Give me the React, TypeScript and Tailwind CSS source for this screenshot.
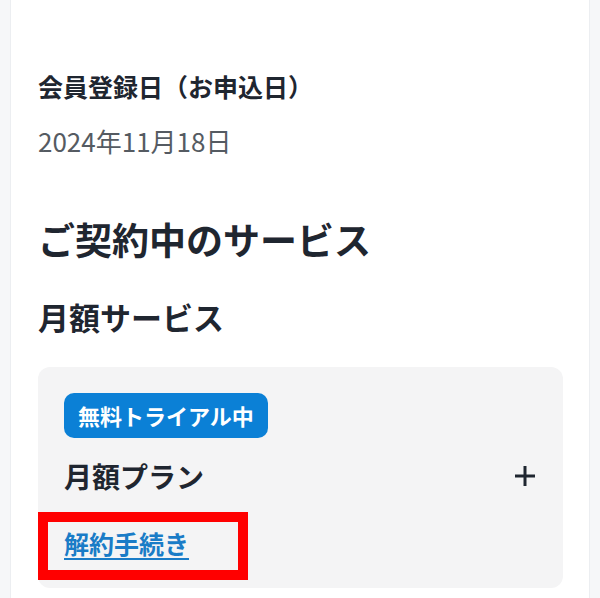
import React from 'react';

function PlusIcon() {
  return (
    <svg width="20" height="20" viewBox="0 0 20 20" className="text-[#1f2630]">
      <path d="M10 0v20M0 10h20" stroke="currentColor" strokeWidth="3" fill="none" />
    </svg>
  );
}

export default function App() {
  return (
    <div className="min-h-screen bg-[#f6f7f9] px-[10px] font-['Noto_Sans_CJK_JP','Noto_Sans',sans-serif]">
      <div className="min-h-[598px] bg-white border-x border-[#eceef1] pl-[27px] pr-[26px] pt-[70px]">
        {/* registration date */}
        <h3 className="text-[25px] leading-[32px] font-bold text-[#1f2630]">会員登録日（お申込日）</h3>
        <p className="mt-[21px] text-[26px] leading-[36px] text-[#555b62]">2024年11月18日</p>

        {/* contracted services */}
        <h2 className="mt-[56px] text-[37px] leading-[48px] font-bold text-[#1f2630]">ご契約中のサービス</h2>
        <h3 className="mt-[34px] text-[31px] leading-[40px] font-bold text-[#1f2630]">月額サービス</h3>

        <div className="relative mt-[30px] rounded-[12px] bg-[#f4f4f5] pl-[26px] pr-[28px] pt-[26px] pb-[28px]">
          <span className="inline-block h-[45px] rounded-[10px] bg-[#0b80d6] px-[14px] text-[22px] leading-[45px] font-bold text-white">
            無料トライアル中
          </span>
          <div className="mt-[20px] flex items-center justify-between">
            <span className="text-[28px] leading-[36px] font-bold text-[#1f2630]">月額プラン</span>
            <PlusIcon />
          </div>
          <div className="mt-[32px]">
            <a href="#" className="text-[25px] leading-[34px] font-bold text-[#1a7cc7] underline decoration-2 underline-offset-[4px]">
              解約手続き
            </a>
          </div>
          {/* highlight annotation */}
          <div className="absolute left-0 top-[145px] h-[68px] w-[210px] border-[10px] border-[#ff0000]" />
        </div>
      </div>
    </div>
  );
}
